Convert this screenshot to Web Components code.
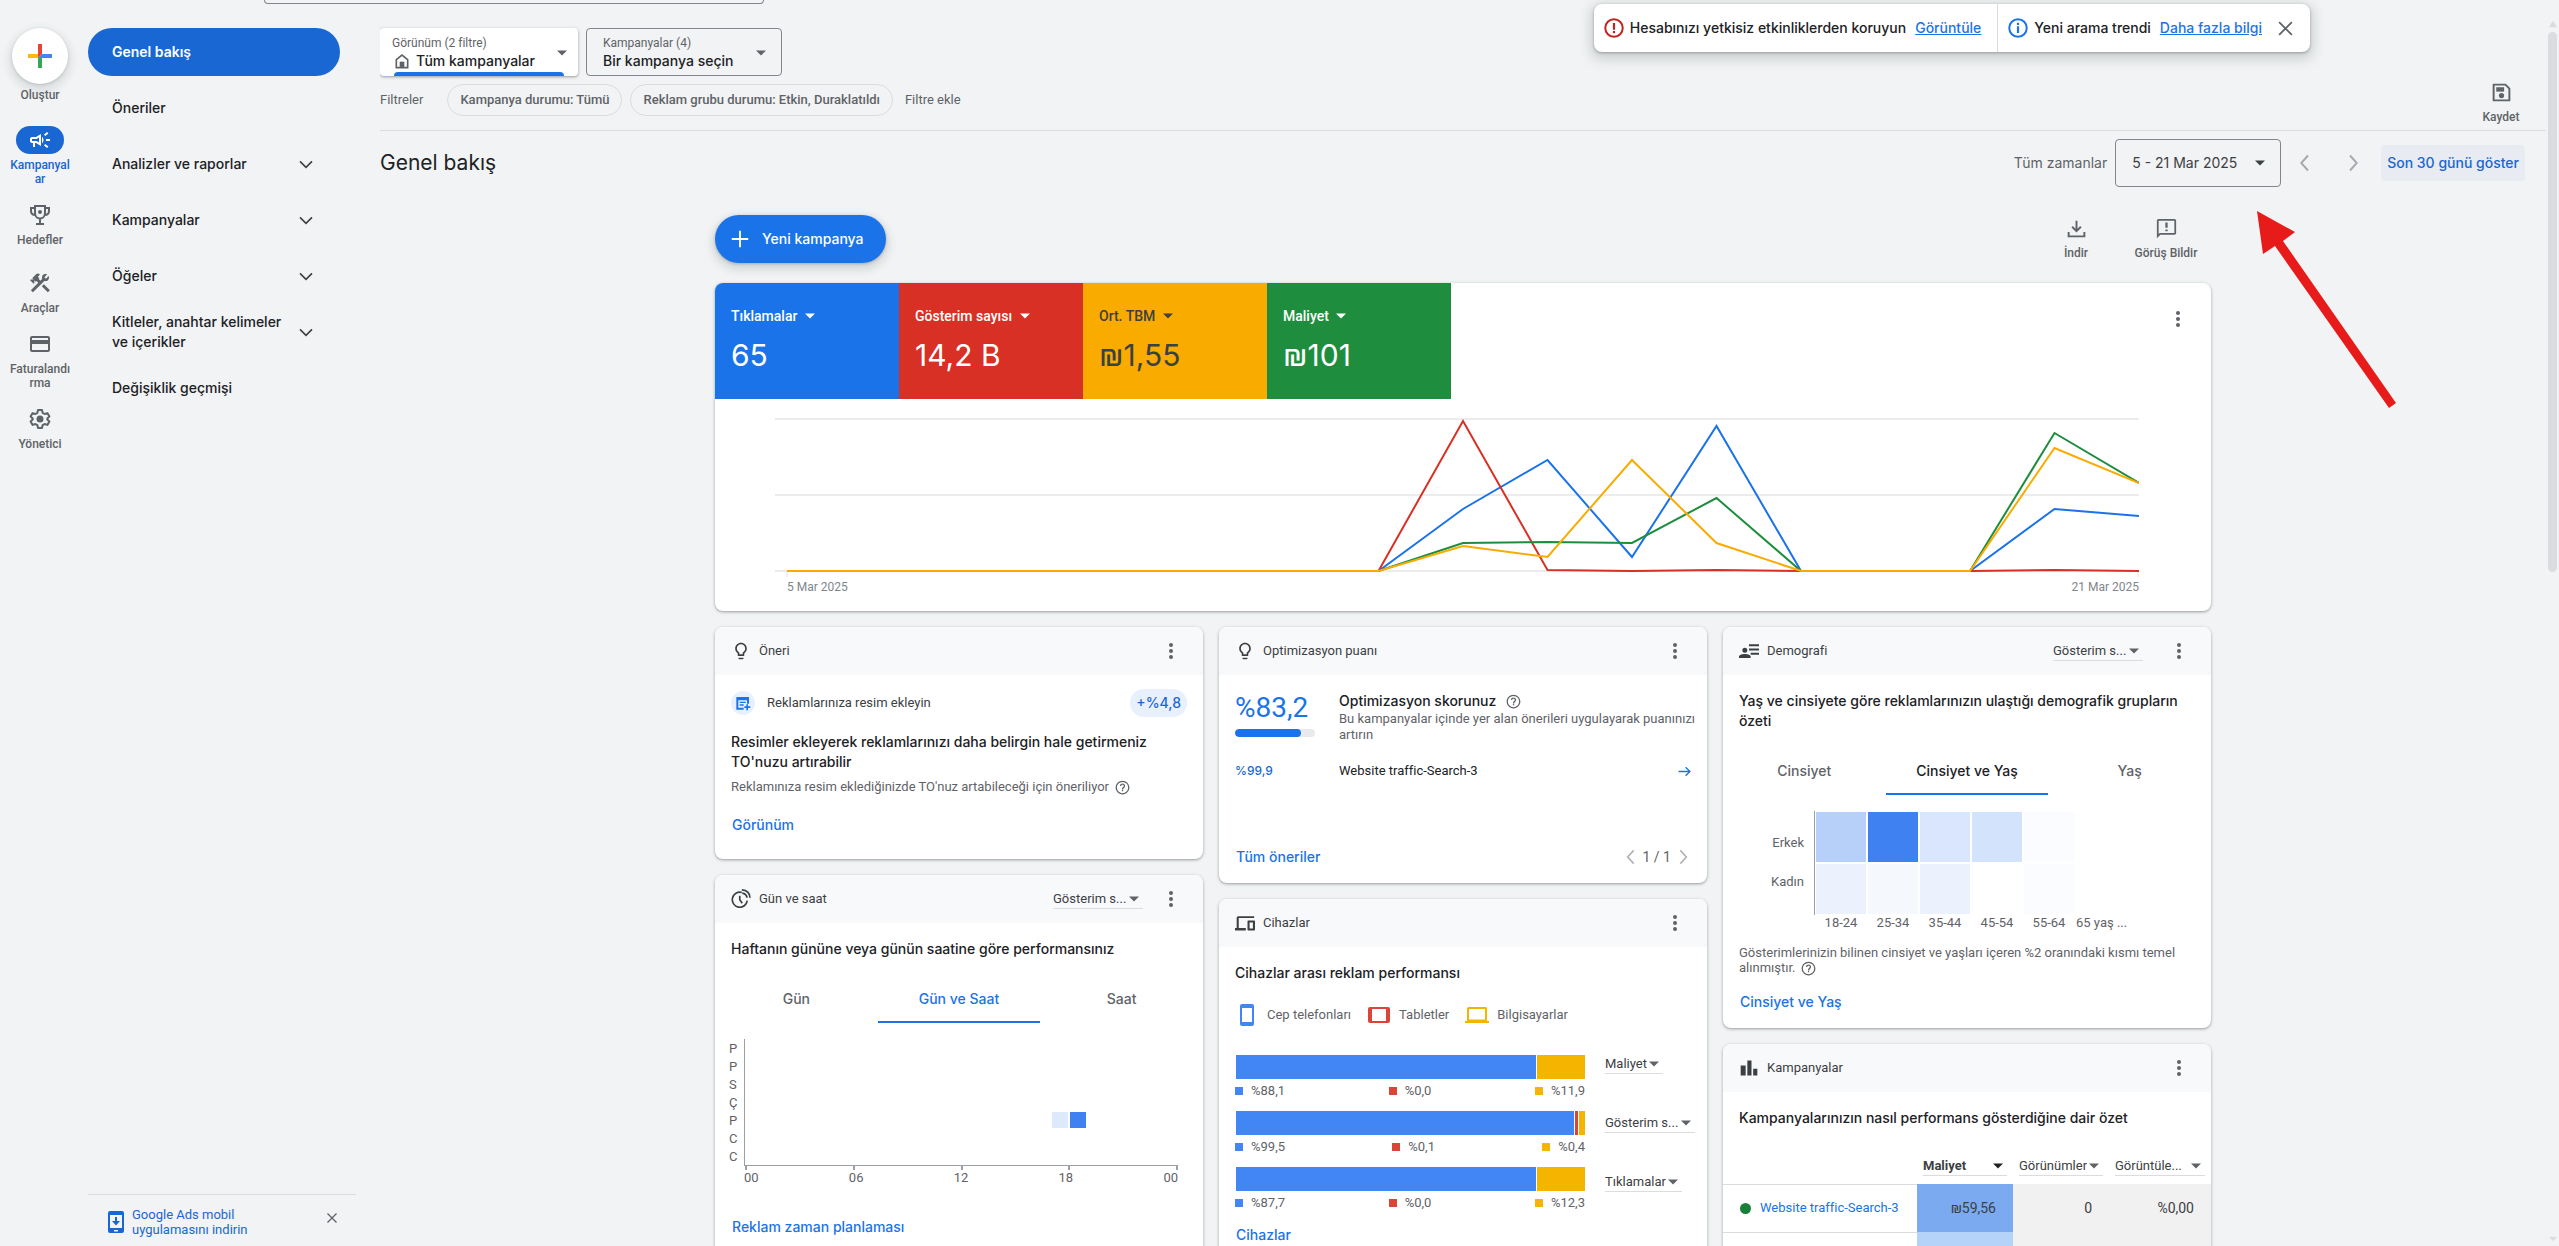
<!DOCTYPE html>
<html lang="tr">
<head>
<meta charset="utf-8">
<title>Genel bakış - Google Ads</title>
<style>
    body {
        margin: 0;
        height: 100vh;
        overflow: hidden;
        background: #f1f3f4;
        color: #202124;
        font: 12px/16px Roboto, "Liberation Sans", sans-serif;
        --title-font: Inter, "Open Sans", sans-serif;
        --blue: #1a73e8;
        --grey: #5f6368;
        --line: #dadce0;
    }
</style>
</head>
<body>
<ads-app></ads-app>

<script>
const ICONS = {
    plus: '<path fill="currentColor" d="M11 3h2v8h8v2h-8v8h-2v-8H3v-2h8z"/>',
    create: '<path fill="#fbbc04" d="M0 10h14l-4 4H0z"/><path fill="#34a853" d="M10 14h4v10h-4z"/><path fill="#4285f4" d="M14 10h10v4H10z"/><path fill="#ea4335" d="M10 0h4v10l-4 4z"/>',
    campaign: '<path fill="currentColor" d="M18 11v2h4v-2h-4zm-2 6.600c1 .7 2.200 1.700 3.200 2.400l1.200-1.600c-1-.7-2.200-1.700-3.200-2.400L16 17.600zM20.400 5.600 19.200 4c-1 .7-2.200 1.700-3.200 2.400L17.200 8c1-.7 2.200-1.600 3.200-2.400zM4 9c-1.100 0-2 .9-2 2v2c0 1.100.9 2 2 2h1v4h2v-4h1l5 3V6L8 9H4zm5 1.700 2-1.200v5l-2-1.200-.5-.3H4v-2h4.500l.5-.3zM15.500 12c0-1.300-.6-2.500-1.500-3.300v6.700c.9-.9 1.500-2.100 1.500-3.400z"/>',
    trophy: '<g fill="none" stroke="currentColor" stroke-width="2"><path d="M7 3h10v7c0 3-2 5.500-5 5.500S7 13 7 10zM7 5H3v3c0 2.500 2 4 4.500 4M17 5h4v3c0 2.500-2 4-4.500 4M12 15.500V21M8 21h8"/></g><circle cx="12" cy="9" r="2" fill="currentColor"/>',
    tools: '<path fill="currentColor" d="M13.780 15.300l6 6 2.110-2.160-6-6-2.110 2.160zm3.720-5.200c-.39 0-.81-.05-1.140-.19L4.970 21.250l-2.110-2.110 7.410-7.400L8.500 9.960l-.72.7-1.450-1.410v2.860l-.7.7-3.520-3.560.7-.7h2.810l-1.400-1.410 3.560-3.560a2.976 2.976 0 0 1 4.220 0L9.890 5.740l1.410 1.400-.71.71 1.790 1.780 1.820-1.880c-.14-.33-.2-.75-.2-1.120a3.490 3.490 0 0 1 3.500-3.520c.59 0 1.110.14 1.580.42L16.410 6.200l1.500 1.500 2.670-2.670c.28.47.42.97.42 1.600 0 1.920-1.550 3.470-3.500 3.470z"/>',
    card: '<path fill="currentColor" d="M20 4H4c-1.110 0-2 .89-2 2v12c0 1.110.89 2 2 2h16c1.110 0 2-.89 2-2V6c0-1.110-.89-2-2-2zm0 14H4v-6h16v6zm0-10H4V6h16v2z"/>',
    gear: '<path fill="none" stroke="currentColor" stroke-width="2" stroke-linejoin="round" d="M10 3h4l.6 2.800 2 1.200 2.800-.9 2 3.400-2.100 1.900v1.200l2.100 1.900-2 3.400-2.800-.9-2 1.200L14 21h-4l-.6-2.800-2-1.200-2.800.9-2-3.400 2.100-1.900v-1.200L2.600 9.500l2-3.400 2.800.9 2-1.200z"/><circle cx="12" cy="12" r="3.500" fill="currentColor"/>',
    down: '<path fill="none" stroke="currentColor" stroke-width="2.400" d="M3 8l9 9 9-9"/>',
    left: '<path fill="none" stroke="currentColor" stroke-width="2.500" d="M16 2l-9 10 9 10"/>',
    right: '<path fill="none" stroke="currentColor" stroke-width="2.500" d="M8 2l9 10-9 10"/>',
    arrow: '<path fill="none" stroke="currentColor" stroke-width="2.500" d="M1 12h21M14 4l8 8-8 8"/>',
    close: '<path fill="none" stroke="currentColor" stroke-width="2.500" d="M3 3l18 18M21 3L3 21"/>',
    home: '<path fill="none" stroke="currentColor" stroke-width="2.500" d="M3.500 10L12 3l8.500 7v12h-17z"/><path fill="currentColor" d="M8.500 13h7v9h-7z"/>',
    caret: '<path fill="currentColor" d="M2 7h20L12 17z"/>',
    caretUp: '<path fill="currentColor" d="M2 20h20L12 4z"/>',
    error: '<circle cx="12" cy="12" r="10.500" fill="none" stroke="currentColor" stroke-width="2.400"/><path fill="currentColor" d="M10.700 6h2.600v8h-2.600zM10.700 15.700h2.600v2.600h-2.600z"/>',
    info: '<circle cx="12" cy="12" r="10.500" fill="none" stroke="currentColor" stroke-width="2.400"/><path fill="currentColor" d="M10.700 10h2.600v8h-2.600zM10.700 5.700h2.600v2.600h-2.600z"/>',
    save: '<path fill="none" stroke="currentColor" stroke-width="2.200" stroke-linejoin="round" d="M3 3h13.500L21 7.500V21H3z"/><path fill="currentColor" d="M6 6h9v5H6z"/><circle cx="12" cy="15.500" r="3" fill="currentColor"/>',
    download: '<path fill="none" stroke="currentColor" stroke-width="2.200" d="M12 3v12M7 10l5 5 5-5M3 16v5h18v-5"/>',
    feedback: '<path fill="currentColor" d="M21 1H3c-1.100 0-2 .9-2 2v20l4-4h16c1.100 0 2-.9 2-2V3c0-1.100-.9-2-2-2zm0 16H4.200L3 18.200V3h18v14zm-10.300-4h2.600v2h-2.600zm0-8h2.600v6h-2.600z"/>',
    dots: '<g fill="currentColor"><circle cx="12" cy="4" r="2.700"/><circle cx="12" cy="12" r="2.700"/><circle cx="12" cy="20" r="2.700"/></g>',
    bulb: '<path fill="currentColor" d="M9 21c0 .55.45 1 1 1h4c.55 0 1-.45 1-1v-1H9v1zm3-19C8.140 2 5 5.140 5 9c0 2.380 1.190 4.470 3 5.740V17c0 .55.45 1 1 1h6c.55 0 1-.45 1-1v-2.260c1.810-1.270 3-3.360 3-5.740 0-3.860-3.140-7-7-7zm2.850 11.100l-.85.6V16h-4v-2.300l-.85-.6A4.997 4.997 0 017 9c0-2.760 2.240-5 5-5s5 2.240 5 5c0 1.630-.8 3.160-2.150 4.100z"/>',
    clock: '<g fill="none" stroke="currentColor" stroke-width="2"><path d="M13 4.200A9 9 0 1 0 19.500 14M10.500 8v5l3 4M13 1c6 .3 9.500 4 9.800 9.500M13.500 5c3.500.5 5.300 2.500 5.800 5.500"/></g>',
    devices: '<path fill="currentColor" d="M4 6h19V4H4c-1.100 0-2 .9-2 2v12H0v3h13v-3H4.500V6zm19 3h-7c-.55 0-1 .45-1 1v10c0 .55.45 1 1 1h7c.55 0 1-.45 1-1V10c0-.55-.45-1-1-1zm-1.500 9.500h-4v-7h4z"/>',
    people: '<path fill="currentColor" d="M7 8a3 3 0 1 1 0 6 3 3 0 0 1 0-6zM0 20.500v-2c0-2 4-3 7-3s7 1 7 3v2zM12 4h12v2.400H12zM12 9h12v2.400H12zM14 14h10v2.400H14z"/>',
    bars: '<path fill="currentColor" d="M2 9h6v12H2zM10 3h5v18h-5zM17 13h5v8h-5z"/>',
    help: '<path fill="currentColor" d="M11 18h2v-2h-2v2zm1-17C5.900 1 1 5.900 1 12s4.900 11 11 11 11-4.900 11-11S18.100 1 12 1zm0 20a9 9 0 1 1 0-18 9 9 0 0 1 0 18zm0-15.500c-2.400 0-4.200 1.800-4.200 4.200h2.200c0-1.100.9-2 2-2s2 .9 2 2c0 2-3 1.900-3 5.300h2.200c0-2.300 3-2.600 3-5.300 0-2.400-1.800-4.200-4.200-4.200z"/>',
    image: '<path fill="currentColor" d="M2 3h19v10h-3v-5H5v11h8v3H2zM7 10h9v2H7zM7 14h6v2H7zM17 14h2.500v3H23v2.500h-3.500V23H17v-3.500h-3V17h3z"/>',
    phone: '<path fill="currentColor" fill-rule="evenodd" d="M7 1h10a2 2 0 0 1 2 2v18a2 2 0 0 1-2 2H7a2 2 0 0 1-2-2V3a2 2 0 0 1 2-2zm0 4v14h10V5z"/>',
    tablet: '<path fill="currentColor" fill-rule="evenodd" d="M3 4h18a2 2 0 0 1 2 2v12a2 2 0 0 1-2 2H3a2 2 0 0 1-2-2V6a2 2 0 0 1 2-2zm2 2v12h14V6z"/>',
    laptop: '<path fill="currentColor" fill-rule="evenodd" d="M3.500 4h17A1.500 1.500 0 0 1 22 5.500V18h2v2H0v-2h2V5.500A1.500 1.500 0 0 1 3.500 4zm.5 2v10.500h16V6z"/>',
    mobileApp: '<path fill="currentColor" fill-rule="evenodd" d="M6 1h12a2 2 0 0 1 2 2v18a2 2 0 0 1-2 2H6a2 2 0 0 1-2-2V3a2 2 0 0 1 2-2zm0 4v13h12V5zm4 15v1.500h4V20z"/><path fill="currentColor" d="M11 7h2v4h3l-4 4.500L8 11h3z"/>'
};

class ShadowElement extends HTMLElement {
    constructor() {
        super();
        this.shadowDOM = this.attachShadow({mode: 'open'});
    }

    connectedCallback() {
        this.render();
    }

    attr(name, fallback = '') {
        return this.getAttribute(name) || fallback;
    }
}

const BASE = `
    * {
        box-sizing: border-box;
    }
    button {
        font: inherit;
        color: inherit;
        background: none;
        border: 0;
        padding: 0;
        cursor: pointer;
    }
    a {
        color: var(--blue);
        text-decoration: none;
    }
    h1, h2, h3, p {
        margin: 0;
        font-weight: 400;
    }
`;

class AdsIcon extends ShadowElement {
    render() {
        const size = this.attr('size', '20');
        this.shadowDOM.innerHTML = `
        <style>
            :host {
                display: inline-flex;
                flex: none;
            }
        </style>
        <svg width="${size}" height="${size}" viewBox="0 0 24 24" aria-hidden="true">${ICONS[this.attr('name')]}</svg>
        `;
    }
}

class TextLink extends ShadowElement {
    render() {
        this.shadowDOM.innerHTML = `
        <style>
            ${BASE}
            :host {
                display: block;
                padding-left: 1px;
                font: 500 14px/20px var(--title-font);
            }
        </style>
        <a href="#"><slot></slot></a>
        `;
    }
}

class MetricSelect extends ShadowElement {
    render() {
        this.shadowDOM.innerHTML = `
        <style>
            ${BASE}
            :host {
                display: inline-grid;
                align-items: center;
                font-size: 13px;
                line-height: 16px;
                color: #3c4043;
                border-bottom: 1px solid var(--line);
            }
            :host([plain]) {
                border-bottom: 0;
                color: inherit;
                font-size: 14px;
                font-weight: 500;
            }
            :host([strong]) {
                font-weight: 700;
            }
            select, ads-icon {
                grid-area: 1 / 1;
            }
            select {
                appearance: none;
                width: 100%;
                height: 18px;
                padding: 0 16px 0 0;
                border: 0;
                background: none;
                font: inherit;
                color: inherit;
            }
            :host([plain]) select {
                padding-right: 21px;
            }
            ads-icon {
                justify-self: end;
                padding-right: 3px;
                pointer-events: none;
                color: var(--caret, #5f6368);
            }
        </style>
        <select aria-label="Metrik"><option>${this.attr('value')}</option></select>
        <ads-icon name="caret" size="12"></ads-icon>
        `;
    }
}

class RailItem extends ShadowElement {
    render() {
        this.shadowDOM.innerHTML = `
        <style>
            ${BASE}
            :host {
                display: block;
                color: var(--grey);
            }
            a {
                display: flex;
                flex-direction: column;
                align-items: center;
                gap: 4px;
                color: inherit;
                font-weight: 500;
                font-size: 12px;
                line-height: 14px;
                text-align: center;
            }
            .pill {
                display: flex;
                align-items: center;
                justify-content: center;
                width: 48px;
                height: 28px;
                border-radius: 14px;
            }
            :host([selected]) {
                color: #1967d2;
            }
            :host([selected]) .pill {
                background: #1967d2;
                color: #fff;
            }
        </style>
        <a href="#"><span class="pill"><ads-icon name="${this.attr('icon')}" size="24"></ads-icon></span><span><slot></slot></span></a>
        `;
    }
}

class SideRail extends ShadowElement {
    render() {
        this.shadowDOM.innerHTML = `
        <style>
            ${BASE}
            :host {
                display: flex;
                flex-direction: column;
                gap: 15px;
                padding-top: 24px;
            }
            .create {
                display: flex;
                flex-direction: column;
                align-items: center;
                gap: 4px;
                margin-bottom: 9px;
                color: var(--grey);
                font-weight: 500;
                line-height: 14px;
            }
            .circle {
                display: flex;
                align-items: center;
                justify-content: center;
                width: 56px;
                height: 56px;
                border-radius: 50%;
                background: #fff;
                box-shadow: 0 1px 3px rgba(60, 64, 67, .2), 0 4px 8px 3px rgba(60, 64, 67, .12);
            }
            .group {
                margin-top: 7px;
            }
        </style>
        <button class="create"><span class="circle"><ads-icon name="create" size="24"></ads-icon></span>Oluştur</button>
        <rail-item icon="campaign" selected>Kampanyal<br>ar</rail-item>
        <rail-item icon="trophy">Hedefler</rail-item>
        <rail-item icon="tools" class="group">Araçlar</rail-item>
        <rail-item icon="card">Faturalandı<br>rma</rail-item>
        <rail-item icon="gear">Yönetici</rail-item>
        `;
    }
}

class NavItem extends ShadowElement {
    render() {
        this.shadowDOM.innerHTML = `
        <style>
            ${BASE}
            :host {
                display: block;
                font: 500 14px/20px var(--title-font);
            }
            a {
                display: flex;
                align-items: center;
                justify-content: space-between;
                width: 252px;
                height: 48px;
                padding: 0 26px 0 24px;
                border-radius: 24px;
                color: #202124;
                white-space: nowrap;
            }
            ads-icon {
                color: #3c4043;
            }
            :host([selected]) a {
                background: #1967d2;
                color: #fff;
                font-weight: 600;
            }
        </style>
        <a href="#"><span><slot></slot></span>${this.hasAttribute('expandable') ? '<ads-icon name="down" size="16"></ads-icon>' : ''}</a>
        `;
    }
}

class SideNav extends ShadowElement {
    render() {
        this.shadowDOM.innerHTML = `
        <style>
            ${BASE}
            :host {
                display: flex;
                flex-direction: column;
                justify-content: space-between;
                padding-top: 24px;
                margin: 0 24px 0 8px;
            }
            nav {
                display: flex;
                flex-direction: column;
                gap: 8px;
            }
            footer {
                display: flex;
                align-items: center;
                gap: 4px;
                height: 52px;
                padding: 3px 4px 0 16px;
                border-top: 1px solid var(--line);
                font-size: 13px;
                line-height: 15px;
            }
            footer a {
                flex: 1;
                color: #1967d2;
            }
            footer ads-icon {
                color: #1967d2;
            }
            footer button {
                display: flex;
                align-self: flex-start;
                padding: 14px;
                color: var(--grey);
            }
            footer button ads-icon {
                color: inherit;
            }
        </style>
        <nav>
            <nav-item selected>Genel bakış</nav-item>
            <nav-item>Öneriler</nav-item>
            <nav-item expandable>Analizler ve raporlar</nav-item>
            <nav-item expandable>Kampanyalar</nav-item>
            <nav-item expandable>Öğeler</nav-item>
            <nav-item expandable>Kitleler, anahtar kelimeler<br>ve içerikler</nav-item>
            <nav-item>Değişiklik geçmişi</nav-item>
        </nav>
        <footer>
            <ads-icon name="mobileApp" size="24"></ads-icon>
            <a href="#">Google Ads mobil<br>uygulamasını indirin</a>
            <button aria-label="Kapat"><ads-icon name="close" size="12"></ads-icon></button>
        </footer>
        `;
    }
}

class ScopePicker extends ShadowElement {
    render() {
        const icon = this.attr('icon');
        this.shadowDOM.innerHTML = `
        <style>
            ${BASE}
            :host {
                display: block;
            }
            button {
                display: flex;
                align-items: center;
                justify-content: space-between;
                position: relative;
                width: 196px;
                height: 48px;
                padding: 2px 14px 0 16px;
                border: 1px solid #80868b;
                border-radius: 4px;
                text-align: left;
            }
            .label {
                color: var(--grey);
                line-height: 16px;
            }
            .value {
                display: flex;
                align-items: center;
                gap: 6px;
                font: 500 14px/20px var(--title-font);
                white-space: nowrap;
            }
            .value ads-icon {
                padding-left: 2px;
            }
            button > ads-icon, .value ads-icon {
                color: var(--grey);
            }
            :host([active]) button {
                width: 198px;
                padding: 1px 10px 0 12px;
                border: 0;
                background: #fff;
                box-shadow: 0 1px 2px rgba(60, 64, 67, .3), 0 1px 3px 1px rgba(60, 64, 67, .15);
            }
            :host([active]) button::after {
                content: "";
                position: absolute;
                left: 14px;
                right: 14px;
                bottom: 0;
                height: 4px;
                border-radius: 4px 4px 0 0;
                background: var(--blue);
            }
        </style>
        <button>
            <span>
                <span class="label">${this.attr('label')}</span>
                <span class="value">${icon ? `<ads-icon name="${icon}" size="16"></ads-icon>` : ''}${this.attr('value')}</span>
            </span>
            <ads-icon name="caret" size="12"></ads-icon>
        </button>
        `;
    }
}

class ActionButton extends ShadowElement {
    render() {
        this.shadowDOM.innerHTML = `
        <style>
            ${BASE}
            :host {
                display: block;
            }
            button {
                display: flex;
                flex-direction: column;
                align-items: center;
                gap: 6px;
                min-width: 90px;
                padding: 4px 8px;
                color: var(--grey);
                font-weight: 500;
                font-size: 12px;
            }
        </style>
        <button><ads-icon name="${this.attr('icon')}" size="21"></ads-icon>${this.attr('label')}</button>
        `;
    }
}

class PageToolbar extends ShadowElement {
    render() {
        this.shadowDOM.innerHTML = `
        <style>
            ${BASE}
            :host {
                display: flex;
                justify-content: space-between;
                align-items: flex-end;
                height: 103px;
                border-bottom: 1px solid var(--line);
                color: var(--grey);
            }
            .left {
                align-self: flex-start;
                display: flex;
                flex-direction: column;
                gap: 8px;
            }
            .row {
                display: flex;
                align-items: center;
                gap: 8px;
                color: #202124;
            }
            .filters {
                color: var(--grey);
                font-size: 13px;
            }
            .filters span {
                margin-right: 16px;
            }
            .chip {
                height: 32px;
                padding: 0 12px;
                border: 1px solid var(--line);
                border-radius: 16px;
                font-weight: 500;
            }
            .add {
                padding: 0 4px;
            }
            action-button {
                margin-bottom: 1px;
            }
        </style>
        <div class="left">
            <div class="row">
                <scope-picker active icon="home" label="Görünüm (2 filtre)" value="Tüm kampanyalar"></scope-picker>
                <scope-picker label="Kampanyalar (4)" value="Bir kampanya seçin"></scope-picker>
            </div>
            <div class="row filters">
                <span>Filtreler</span>
                <button class="chip">Kampanya durumu: Tümü</button>
                <button class="chip">Reklam grubu durumu: Etkin, Duraklatıldı</button>
                <button class="add">Filtre ekle</button>
            </div>
        </div>
        <action-button icon="save" label="Kaydet"></action-button>
        `;
    }
}

class PageTitle extends ShadowElement {
    render() {
        this.shadowDOM.innerHTML = `
        <style>
            ${BASE}
            :host {
                display: flex;
                align-items: center;
                justify-content: space-between;
                padding: 8px 21px 0 0;
                font: 14px/20px var(--title-font);
            }
            h1 {
                font: 400 21px/28px var(--title-font);
            }
            .range {
                display: flex;
                align-items: center;
            }
            .range > span {
                margin-right: 8px;
                color: var(--grey);
            }
            .date {
                display: flex;
                align-items: center;
                justify-content: space-between;
                width: 166px;
                height: 48px;
                padding: 0 14px 0 16px;
                border: 1px solid #80868b;
                border-radius: 4px;
                color: #3c4043;
            }
            .step {
                display: flex;
                justify-content: center;
                width: 48px;
                color: #a5a9ad;
            }
            .last {
                height: 36px;
                margin-left: 4px;
                padding: 0 6px;
                border-radius: 4px;
                background: #e8ebf1;
                color: #1967d2;
                font-weight: 500;
            }
        </style>
        <h1>Genel bakış</h1>
        <div class="range">
            <span>Tüm zamanlar</span>
            <button class="date">5 - 21 Mar 2025 <ads-icon name="caret" size="12"></ads-icon></button>
            <button class="step" aria-label="Önceki"><ads-icon name="left" size="18"></ads-icon></button>
            <button class="step" aria-label="Sonraki"><ads-icon name="right" size="18"></ads-icon></button>
            <button class="last">Son 30 günü göster</button>
        </div>
        `;
    }
}

class AlertBar extends ShadowElement {
    render() {
        this.shadowDOM.innerHTML = `
        <style>
            ${BASE}
            :host {
                display: flex;
                align-items: stretch;
                height: 48px;
                border-radius: 8px;
                background: #fff;
                box-shadow: 0 1px 3px rgba(60, 64, 67, .4), 0 4px 12px 4px rgba(60, 64, 67, .18);
                font: 500 14px/20px var(--title-font);
            }
            div {
                display: flex;
                align-items: center;
                gap: 6px;
                padding: 0 16px 0 10px;
            }
            div + div {
                border-left: 1px solid var(--line);
            }
            a {
                margin-left: 3px;
                text-decoration: underline;
            }
            .error {
                color: #c5221f;
            }
            .info {
                color: var(--blue);
            }
            button {
                display: flex;
                margin-left: 9px;
                color: var(--grey);
            }
        </style>
        <div><ads-icon class="error" name="error"></ads-icon>Hesabınızı yetkisiz etkinliklerden koruyun <a href="#">Görüntüle</a></div>
        <div><ads-icon class="info" name="info"></ads-icon>Yeni arama trendi <a href="#">Daha fazla bilgi</a>
            <button aria-label="Kapat"><ads-icon name="close" size="17"></ads-icon></button>
        </div>
        `;
    }
}

class ScoreTile extends ShadowElement {
    render() {
        this.shadowDOM.innerHTML = `
        <style>
            ${BASE}
            :host {
                display: flex;
                flex-direction: column;
                gap: 10px;
                width: 184px;
                height: 116px;
                padding: 24px 16px 0;
                color: #fff;
                --caret: currentColor;
            }
            metric-select {
                align-self: flex-start;
            }
            strong {
                font: 400 30px/40px var(--title-font);
            }
        </style>
        <metric-select plain value="${this.attr('label')}"></metric-select>
        <strong>${this.attr('value')}</strong>
        `;
    }
}

class TrendChart extends ShadowElement {
    // one value per day, 0 is the base line and 152 the top one
    series() {
        return [
            ['#1a73e8', [0, 0, 0, 0, 0, 0, 0, 0, 62, 111, 14, 145, 0, 0, 0, 62, 55]],
            ['#d93025', [0, 0, 0, 0, 0, 0, 0, 0, 150, 1, 0, 1, 0, 0, 0, 1, 0]],
            ['#1e8e3e', [0, 0, 0, 0, 0, 0, 0, 0, 28, 29, 28, 73, 0, 0, 0, 138, 88]],
            ['#f9ab00', [0, 0, 0, 0, 0, 0, 0, 0, 25, 14, 111, 28, 0, 0, 0, 123, 88]]
        ];
    }

    render() {
        const step = 1352 / 16;
        const lines = this.series().map(([color, values]) => {
            const points = values.map((v, i) => `${12 + i * step},${157 - v}`).join(' ');
            return `<polyline points="${points}" fill="none" stroke="${color}" stroke-width="2"/>`;
        }).join('');
        this.shadowDOM.innerHTML = `
        <style>
            :host {
                display: block;
                padding: 15px 72px 16px 60px;
                color: #80868b;
            }
            svg {
                display: block;
                width: 100%;
            }
            div {
                display: flex;
                justify-content: space-between;
                margin-top: 1px;
                padding-left: 12px;
            }
        </style>
        <svg viewBox="0 0 1364 164" role="img" aria-label="Performans grafiği">
            <path d="M0 5h1364M0 81h1364M0 157h1364" stroke="#ececec" stroke-width="2"/>
            <path d="M12 157v6M1363 157v6" stroke="#e0e0e0"/>
            ${lines}
        </svg>
        <div><span>5 Mar 2025</span><span>21 Mar 2025</span></div>
        `;
    }
}

class SummaryCard extends ShadowElement {
    render() {
        this.shadowDOM.innerHTML = `
        <style>
            ${BASE}
            :host {
                display: block;
                overflow: hidden;
                border-radius: 8px;
                background: #fff;
                box-shadow: 0 1px 2px rgba(60, 64, 67, .3), 0 1px 3px 1px rgba(60, 64, 67, .15);
            }
            .tiles {
                display: flex;
            }
            button {
                display: flex;
                margin: 27px 24px 0 auto;
                align-self: flex-start;
                color: var(--grey);
            }
        </style>
        <div class="tiles">
            <score-tile style="background:#1a73e8" label="Tıklamalar" value="65"></score-tile>
            <score-tile style="background:#d93025" label="Gösterim sayısı" value="14,2 B"></score-tile>
            <score-tile style="background:#f9ab00;color:#3c4043" label="Ort. TBM" value="₪1,55"></score-tile>
            <score-tile style="background:#1e8e3e" label="Maliyet" value="₪101"></score-tile>
            <button aria-label="Diğer"><ads-icon name="dots" size="18"></ads-icon></button>
        </div>
        <trend-chart></trend-chart>
        `;
    }
}

class InfoCard extends ShadowElement {
    render() {
        const metric = this.attr('metric');
        this.shadowDOM.innerHTML = `
        <style>
            ${BASE}
            :host {
                display: block;
                overflow: hidden;
                border-radius: 8px;
                background: #fff;
                box-shadow: 0 1px 2px rgba(60, 64, 67, .3), 0 1px 3px 1px rgba(60, 64, 67, .15);
            }
            header {
                display: flex;
                align-items: center;
                height: 48px;
                padding: 0 23px 0 16px;
                background: #f8f9fb;
                color: #3c4043;
            }
            h2 {
                flex: 1;
                margin-left: 8px;
                font-size: 13px;
            }
            metric-select {
                width: 90px;
                margin-right: var(--metric-gap, 19px);
            }
            button {
                display: flex;
                color: var(--grey);
            }
            section {
                padding: 16px;
            }
        </style>
        <header>
            <ads-icon name="${this.attr('icon')}"></ads-icon>
            <h2>${this.attr('heading')}</h2>
            ${metric ? `<metric-select value="${metric}"></metric-select>` : ''}
            <button aria-label="Diğer"><ads-icon name="dots" size="18"></ads-icon></button>
        </header>
        <section><slot></slot></section>
        `;
    }
}

const CARD = `
    ${BASE}
    :host {
        display: block;
    }
    h3 {
        font: 500 14px/20px var(--title-font);
        white-space: nowrap;
    }
    .muted {
        color: var(--grey);
        font-size: 13px;
        line-height: 16px;
        white-space: nowrap;
    }
`;

class CardTabs extends ShadowElement {
    render() {
        const tabs = this.attr('tabs').split(',').map((tab, i) =>
            `<button role="tab" aria-selected="${i === 1}">${tab}</button>`).join('');
        this.shadowDOM.innerHTML = `
        <style>
            ${BASE}
            :host {
                display: grid;
                grid-template-columns: repeat(3, 1fr);
                height: 48px;
                margin: 16px -16px;
                color: var(--grey);
                font: 500 14px/20px var(--title-font);
            }
            button {
                padding-top: 2px;
                border-bottom: 2px solid transparent;
            }
            [aria-selected="true"] {
                color: var(--active, #1a73e8);
                border-color: var(--blue);
            }
        </style>
        ${tabs}
        `;
    }
}

class SuggestionCard extends ShadowElement {
    render() {
        this.shadowDOM.innerHTML = `
        <style>
            ${CARD}
            .top {
                display: flex;
                align-items: center;
                gap: 12px;
                margin: -2px 0 15px;
                font-size: 13px;
                color: #3c4043;
            }
            .round {
                display: flex;
                align-items: center;
                justify-content: center;
                width: 24px;
                height: 24px;
                border-radius: 50%;
                background: #e8f0fe;
                color: var(--blue);
            }
            .uplift {
                margin-left: auto;
                padding: 4px 6px;
                border-radius: 14px;
                background: #e8f0fe;
                color: #1967d2;
                font: 500 14px/20px var(--title-font);
            }
            .muted {
                display: flex;
                align-items: center;
                gap: 6px;
                margin: 7px 0 20px;
            }
            text-link {
                margin-bottom: 8px;
            }
        </style>
        <info-card icon="bulb" heading="Öneri">
            <div class="top">
                <span class="round"><ads-icon name="image" size="16"></ads-icon></span>
                Reklamlarınıza resim ekleyin
                <span class="uplift">+%4,8</span>
            </div>
            <h3>Resimler ekleyerek reklamlarınızı daha belirgin hale getirmeniz<br>TO'nuzu artırabilir</h3>
            <p class="muted">Reklamınıza resim eklediğinizde TO'nuz artabileceği için öneriliyor <ads-icon name="help" size="15"></ads-icon></p>
            <text-link>Görünüm</text-link>
        </info-card>
        `;
    }
}

class DayHourCard extends ShadowElement {
    render() {
        const days = ['P', 'P', 'S', 'Ç', 'P', 'C', 'C'].map(day => `<span>${day}</span>`).join('');
        const hours = ['00', '06', '12', '18', '00'].map(hour => `<span>${hour}</span>`).join('');
        this.shadowDOM.innerHTML = `
        <style>
            ${CARD}
            .chart {
                display: grid;
                grid-template-columns: 13px 434px;
                color: var(--grey);
                font-size: 13px;
                margin: 0 0 31px -2px;
                column-gap: 2px;
            }
            .days {
                display: grid;
                grid-template-rows: repeat(7, 18px);
                line-height: 20px;
            }
            .cells {
                display: grid;
                grid-template: repeat(7, 16px) / repeat(24, 16px);
                gap: 2px;
                padding: 1px;
                border: solid #9aa0a6;
                border-width: 0 0 1px 1px;
            }
            .ticks, .hours {
                grid-column: 2;
                display: flex;
                justify-content: space-between;
            }
            .ticks {
                padding-left: 1px;
            }
            .ticks i {
                width: 2px;
                height: 4px;
                background: #9aa0a6;
            }
            .hours {
                line-height: 16px;
            }
            .low, .high {
                grid-row: 5;
                grid-column: 18;
                background: #dde9fc;
            }
            .high {
                grid-column: 19;
                background: #4081f1;
            }
        </style>
        <info-card icon="clock" heading="Gün ve saat" metric="Gösterim s...">
            <h3>Haftanın gününe veya günün saatine göre performansınız</h3>
            <card-tabs tabs="Gün,Gün ve Saat,Saat"></card-tabs>
            <div class="chart">
                <div class="days">${days}</div>
                <div class="cells"><span class="low"></span><span class="high"></span></div>
                <div class="ticks"><i></i><i></i><i></i><i></i><i></i></div>
                <div class="hours">${hours}</div>
            </div>
            <text-link>Reklam zaman planlaması</text-link>
        </info-card>
        `;
    }
}

class OptimizationCard extends ShadowElement {
    render() {
        this.shadowDOM.innerHTML = `
        <style>
            ${CARD}
            .grid {
                display: grid;
                grid-template-columns: 80px minmax(0, 1fr);
                column-gap: 24px;
                row-gap: 20px;
            }
            .score {
                display: block;
                margin-bottom: 4px;
                color: var(--blue);
                font-weight: 400;
                font-size: 28px;
                line-height: 34px;
            }
            .bar {
                height: 8px;
                border-radius: 4px;
                overflow: hidden;
                background: #e8eaed;
            }
            .bar i {
                display: block;
                width: 83%;
                height: 8px;
                border-radius: 4px;
                background: var(--blue);
            }
            h3, .item, .foot, .pager {
                display: flex;
                align-items: center;
            }
            h3 {
                gap: 10px;
            }
            h3 ads-icon {
                color: var(--grey);
            }
            .small {
                color: #1967d2;
                font: 500 12px/16px var(--title-font);
            }
            .item {
                justify-content: space-between;
                font-size: 13px;
            }
            .item a {
                display: flex;
            }
            .foot {
                justify-content: space-between;
                margin-top: 68px;
            }
            .pager {
                gap: 4px;
                font-size: 14px;
                color: var(--grey);
            }
            .pager button {
                display: flex;
                color: #b0b3b7;
            }
        </style>
        <info-card icon="bulb" heading="Optimizasyon puanı">
            <div class="grid">
                <div><strong class="score">%83,2</strong><div class="bar"><i></i></div></div>
                <div>
                    <h3>Optimizasyon skorunuz <ads-icon name="help" size="15"></ads-icon></h3>
                    <p class="muted">Bu kampanyalar içinde yer alan önerileri uygulayarak puanınızı<br>artırın</p>
                </div>
                <span class="small">%99,9</span>
                <div class="item">Website traffic-Search-3 <a href="#" aria-label="Aç"><ads-icon name="arrow" size="13"></ads-icon></a></div>
            </div>
            <div class="foot">
                <text-link>Tüm öneriler</text-link>
                <div class="pager">
                    <button aria-label="Önceki"><ads-icon name="left" size="16"></ads-icon></button>
                    1 / 1
                    <button aria-label="Sonraki"><ads-icon name="right" size="16"></ads-icon></button>
                </div>
            </div>
        </info-card>
        `;
    }
}

class DeviceBar extends ShadowElement {
    render() {
        const [phone, tablet, laptop] = this.attr('values').split(' ');
        this.shadowDOM.innerHTML = `
        <style>
            ${BASE}
            :host {
                display: block;
                font-size: 13px;
                color: var(--grey);
            }
            .bar {
                display: grid;
                grid-template-columns: ${this.attr('columns')};
                gap: 1px;
                height: 24px;
                padding-left: 1px;
            }
            .key {
                display: flex;
                justify-content: space-between;
                margin-top: 4px;
            }
            .key span {
                display: flex;
                align-items: center;
                gap: 8px;
            }
            .key i {
                width: 8px;
                height: 8px;
            }
            .blue { background: #4285f4; }
            .red { background: #db4437; }
            .yellow { background: #f4b400; }
        </style>
        <div class="bar"><i class="blue"></i>${this.hasAttribute('thin') ? '<i class="red"></i>' : ''}<i class="yellow"></i></div>
        <div class="key">
            <span><i class="blue"></i>${phone}</span>
            <span><i class="red"></i>${tablet}</span>
            <span><i class="yellow"></i>${laptop}</span>
        </div>
        `;
    }
}

class DevicesCard extends ShadowElement {
    render() {
        this.shadowDOM.innerHTML = `
        <style>
            ${CARD}
            .legend {
                display: flex;
                gap: 16px;
                margin: 20px 0 28px;
            }
            .legend span {
                display: flex;
                align-items: center;
                gap: 8px;
            }
            .body {
                display: flex;
                gap: 20px;
                margin-bottom: 14px;
            }
            .bars {
                display: grid;
                flex: none;
                gap: 12px;
                width: 350px;
            }
            .metrics {
                display: flex;
                flex: none;
                flex-direction: column;
                align-items: flex-start;
                gap: 40px;
            }
        </style>
        <info-card icon="devices" heading="Cihazlar">
            <h3>Cihazlar arası reklam performansı</h3>
            <div class="legend muted">
                <span><ads-icon name="phone" size="24" style="color:#4285f4"></ads-icon>Cep telefonları</span>
                <span><ads-icon name="tablet" size="24" style="color:#db4437"></ads-icon>Tabletler</span>
                <span><ads-icon name="laptop" size="24" style="color:#f4b400"></ads-icon>Bilgisayarlar</span>
            </div>
            <div class="body">
                <div class="bars">
                    <device-bar columns="1fr 48px" values="%88,1 %0,0 %11,9"></device-bar>
                    <device-bar thin columns="1fr 3px 6px" values="%99,5 %0,1 %0,4"></device-bar>
                    <device-bar columns="1fr 48px" values="%87,7 %0,0 %12,3"></device-bar>
                </div>
                <div class="metrics">
                    <metric-select value="Maliyet"></metric-select>
                    <metric-select value="Gösterim s..."></metric-select>
                    <metric-select value="Tıklamalar"></metric-select>
                </div>
            </div>
            <text-link>Cihazlar</text-link>
        </info-card>
        `;
    }
}

class DemographyCard extends ShadowElement {
    render() {
        const cells = ['#b7d0f9', '#4081f1', '#dae6fd', '#d3e3fc', '#fbfcff', '#fff',
            '#ebf2fe', '#f5f9fe', '#ebf2fe', '#fff', '#fbfcff', '#fff'];
        const ages = ['18-24', '25-34', '35-44', '45-54', '55-64', '65 yaş ...'];
        this.shadowDOM.innerHTML = `
        <style>
            ${CARD}
            :host {
                --metric-gap: 27px;
            }
            .chart {
                display: grid;
                grid-template-columns: 65px auto;
                justify-content: start;
                column-gap: 10px;
                color: var(--grey);
                font-size: 13px;
                margin-bottom: 14px;
            }
            .rows {
                display: flex;
                flex-direction: column;
                align-items: flex-end;
                gap: 23px;
                padding-top: 24px;
            }
            .cells {
                display: grid;
                grid-template: repeat(2, 50px) / repeat(6, 50px);
                gap: 2px;
                padding: 1px;
                border-left: 1px solid #9aa0a6;
            }
            .ages {
                grid-column: 2;
                display: grid;
                grid-template-columns: repeat(6, 50px);
                gap: 2px;
                padding-left: 2px;
                text-align: center;
                white-space: nowrap;
            }
            .muted {
                line-height: 15px;
                margin-bottom: 16px;
            }
            .muted ads-icon {
                vertical-align: middle;
                margin-left: 2px;
            }
            card-tabs {
                --active: #202124;
            }
        </style>
        <info-card icon="people" heading="Demografi" metric="Gösterim s...">
            <h3>Yaş ve cinsiyete göre reklamlarınızın ulaştığı demografik grupların<br>özeti</h3>
            <card-tabs tabs="Cinsiyet,Cinsiyet ve Yaş,Yaş"></card-tabs>
            <div class="chart">
                <div class="rows"><span>Erkek</span><span>Kadın</span></div>
                <div class="cells">${cells.map(color => `<i style="background:${color}"></i>`).join('')}</div>
                <div class="ages">${ages.map(age => `<span>${age}</span>`).join('')}</div>
            </div>
            <p class="muted">Gösterimlerinizin bilinen cinsiyet ve yaşları içeren %2 oranındaki kısmı temel<br>alınmıştır. <ads-icon name="help" size="15"></ads-icon></p>
            <text-link>Cinsiyet ve Yaş</text-link>
        </info-card>
        `;
    }
}

class CampaignsCard extends ShadowElement {
    render() {
        this.shadowDOM.innerHTML = `
        <style>
            ${CARD}
            .wrap {
                margin: 21px -16px 0;
            }
            table {
                width: 100%;
                table-layout: fixed;
                border-collapse: collapse;
                font-size: 14px;
                color: #3c4043;
            }
            .name { width: 194px; }
            .metric { width: 96px; }
            th {
                height: 35px;
                padding: 0 6px;
                text-align: left;
                font-weight: 400;
            }
            th metric-select {
                width: 100%;
            }
            td {
                height: 48px;
                padding: 0 17px;
                text-align: right;
                background: #f1f1f1;
            }
            td:first-child {
                background: #fff;
                border-top: 1px solid var(--line);
                text-align: left;
                font-size: 13px;
            }
            td a {
                display: flex;
                align-items: center;
                gap: 9px;
                white-space: nowrap;
            }
            td i {
                width: 11px;
                height: 11px;
                border-radius: 50%;
                background: #188038;
            }
        </style>
        <info-card icon="bars" heading="Kampanyalar">
            <h3>Kampanyalarınızın nasıl performans gösterdiğine dair özet</h3>
            <div class="wrap">
                <table>
                    <thead>
                        <tr>
                            <th class="name"></th>
                            <th class="metric"><metric-select strong value="Maliyet" style="--caret:#202124"></metric-select></th>
                            <th class="metric"><metric-select value="Görünümler"></metric-select></th>
                            <th><metric-select value="Görüntüle..."></metric-select></th>
                        </tr>
                    </thead>
                    <tbody>
                        <tr>
                            <td><a href="#"><i></i>Website traffic-Search-3</a></td>
                            <td style="background:#7baaf1">₪59,56</td>
                            <td>0</td>
                            <td>%0,00</td>
                        </tr>
                        <tr>
                            <td></td>
                            <td style="background:#b5d2f8"></td>
                            <td></td>
                            <td></td>
                        </tr>
                    </tbody>
                </table>
            </div>
        </info-card>
        `;
    }
}

class PageScrollbar extends ShadowElement {
    render() {
        this.shadowDOM.innerHTML = `
        <style>
            :host {
                display: flex;
                flex-direction: column;
                align-items: center;
                padding: 15px 2px 2px;
                color: var(--line);
            }
            div {
                flex: 1;
                width: 9px;
                padding: 3px 0;
            }
            i {
                display: block;
                height: 45%;
                border-radius: 5px;
                background: var(--line);
            }
        </style>
        <ads-icon name="caretUp" size="10"></ads-icon>
        <div><i></i></div>
        <ads-icon name="caret" size="10"></ads-icon>
        `;
    }
}

class AdsApp extends ShadowElement {
    render() {
        this.shadowDOM.innerHTML = `
        <style>
            ${BASE}
            :host {
                display: grid;
                grid-template: 4px 1fr / 80px 300px 1fr 13px;
                height: 100vh;
                overflow: hidden;
                position: relative;
            }
            .search {
                grid-column: 1 / -1;
                padding-left: 264px;
                height: 4px;
            }
            .search input {
                display: block;
                width: 500px;
                height: 4px;
                padding: 0;
                border: 1px solid #80868b;
                border-top: 0;
                border-radius: 0 0 4px 4px;
                background: none;
            }
            main {
                min-width: 0;
                min-height: 0;
                overflow: hidden;
                padding-top: 24px;
            }
            .content {
                width: 1496px;
                max-width: 100%;
                margin: 28px auto 0;
            }
            .actions {
                display: flex;
                align-items: center;
                height: 48px;
                margin-bottom: 20px;
            }
            .new {
                display: flex;
                align-items: center;
                gap: 11px;
                height: 48px;
                margin-right: auto;
                padding: 0 22px 0 14px;
                border-radius: 24px;
                background: var(--blue);
                color: #fff;
                font: 500 14px/20px var(--title-font);
                box-shadow: 0 1px 3px rgba(60, 64, 67, .3), 0 4px 8px 3px rgba(60, 64, 67, .15);
            }
            .columns {
                display: grid;
                grid-template-columns: repeat(3, 1fr);
                gap: 16px;
                margin-top: 16px;
            }
            .columns > div {
                display: flex;
                flex-direction: column;
                gap: 16px;
                min-width: 0;
            }
            alert-bar {
                position: absolute;
                top: 4px;
                right: 249px;
            }
            .pointer {
                position: absolute;
                top: 211px;
                right: 162px;
                pointer-events: none;
            }
        </style>
        <div class="search"><input type="search" aria-label="Ara"></div>
        <side-rail></side-rail>
        <side-nav></side-nav>
        <main>
            <page-toolbar></page-toolbar>
            <page-title></page-title>
            <div class="content">
                <div class="actions">
                    <button class="new"><ads-icon name="plus" size="22"></ads-icon>Yeni kampanya</button>
                    <action-button icon="download" label="İndir"></action-button>
                    <action-button icon="feedback" label="Görüş Bildir"></action-button>
                </div>
                <summary-card></summary-card>
                <div class="columns">
                    <div><suggestion-card></suggestion-card><day-hour-card></day-hour-card></div>
                    <div><optimization-card></optimization-card><devices-card></devices-card></div>
                    <div><demography-card></demography-card><campaigns-card></campaigns-card></div>
                </div>
            </div>
        </main>
        <page-scrollbar></page-scrollbar>
        <alert-bar></alert-bar>
        <svg class="pointer" width="140" height="198" viewBox="0 0 140 198" aria-hidden="true">
            <path fill="#e81b1b" d="M0 0l38 21-12 9 113 162-7 5L18 35 6 43z"/>
        </svg>
        `;
    }
}

customElements.define('ads-icon', AdsIcon);
customElements.define('text-link', TextLink);
customElements.define('metric-select', MetricSelect);
customElements.define('rail-item', RailItem);
customElements.define('side-rail', SideRail);
customElements.define('nav-item', NavItem);
customElements.define('side-nav', SideNav);
customElements.define('scope-picker', ScopePicker);
customElements.define('action-button', ActionButton);
customElements.define('page-toolbar', PageToolbar);
customElements.define('page-title', PageTitle);
customElements.define('alert-bar', AlertBar);
customElements.define('score-tile', ScoreTile);
customElements.define('trend-chart', TrendChart);
customElements.define('summary-card', SummaryCard);
customElements.define('info-card', InfoCard);
customElements.define('card-tabs', CardTabs);
customElements.define('suggestion-card', SuggestionCard);
customElements.define('day-hour-card', DayHourCard);
customElements.define('optimization-card', OptimizationCard);
customElements.define('device-bar', DeviceBar);
customElements.define('devices-card', DevicesCard);
customElements.define('demography-card', DemographyCard);
customElements.define('campaigns-card', CampaignsCard);
customElements.define('page-scrollbar', PageScrollbar);
customElements.define('ads-app', AdsApp);
</script>
</body>
</html>
